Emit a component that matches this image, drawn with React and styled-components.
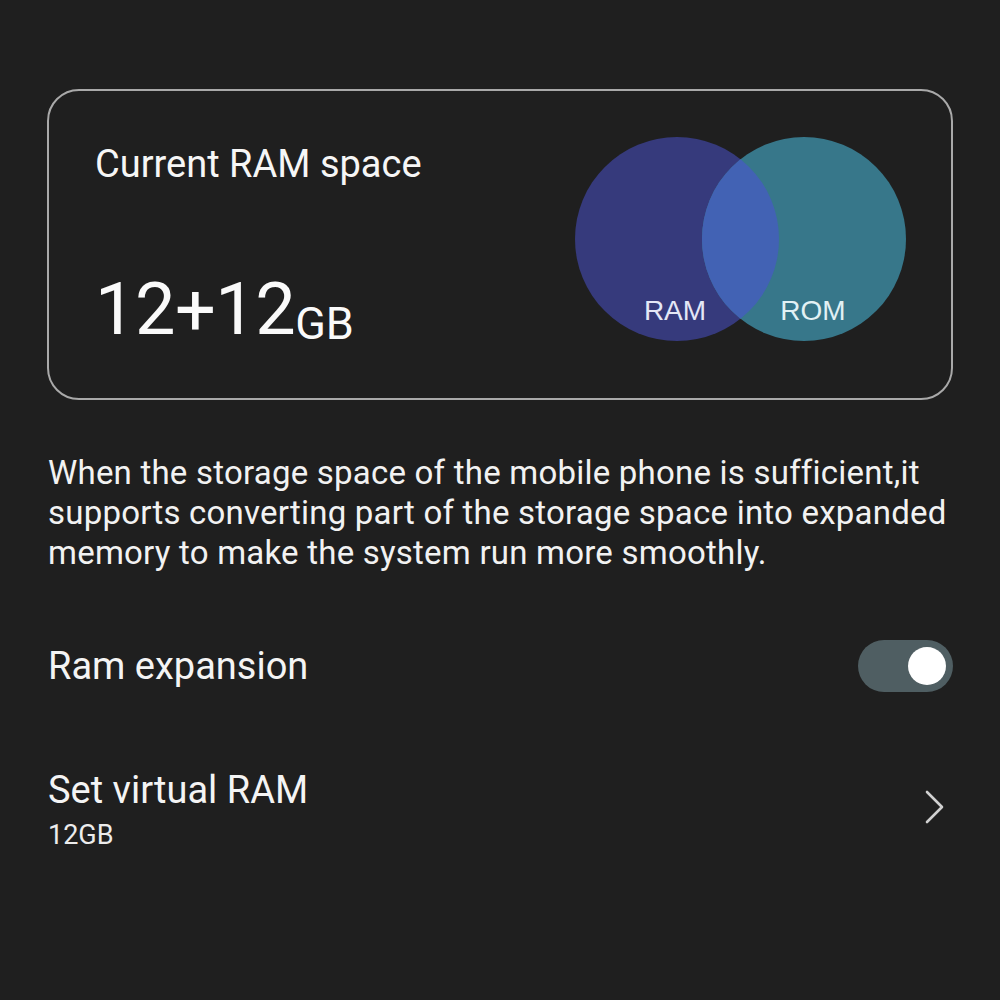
import React from "react";
import styled, { createGlobalStyle } from "styled-components";

const Global = createGlobalStyle`
  html, body {
    margin: 0;
    padding: 0;
    background: #1f1f1f;
  }
  body {
    font-family: Roboto, "Noto Sans", "Liberation Sans", sans-serif;
    color: #f4f4f4;
    -webkit-font-smoothing: antialiased;
  }
`;

const Page = styled.div`
  width: 1000px;
  min-height: 1000px;
  box-sizing: border-box;
  padding: 89px 47px 0 47px;
  background: #1f1f1f;
`;

const Card = styled.section`
  display: flex;
  justify-content: space-between;
  align-items: flex-start;
  border: 2px solid #a9a9a9;
  border-radius: 32px;
  padding: 54px 43px 52px 46px;
`;

const CardText = styled.div`
  display: flex;
  flex-direction: column;
  gap: 91px;
`;

const CardTitle = styled.div`
  font-size: 38px;
  line-height: 1;
  color: #f6f6f6;
`;

const Amount = styled.div`
  font-size: 72px;
  line-height: 1;
  color: #fafafa;
  letter-spacing: -0.5px;
`;

const Unit = styled.span`
  font-size: 45px;
  vertical-align: -5px;
  letter-spacing: 0;
`;

const Venn = styled.svg`
  display: block;
  margin-top: -10px;
  flex: none;
`;

const VennLabel = styled.text`
  font-family: "Liberation Sans", Arial, sans-serif;
  font-size: 28px;
  fill: ${(p) => p.$fill};
`;

const Description = styled.p`
  margin: 53px 0 0 1px;
  font-size: 33px;
  letter-spacing: 0.22px;
  line-height: 40px;
  color: #f2f2f2;
  white-space: nowrap;
`;

const Row = styled.div`
  display: flex;
  align-items: center;
  justify-content: space-between;
  margin-top: ${(p) => p.$top}px;
  padding-left: 1px;
`;

const RowText = styled.div`
  display: flex;
  flex-direction: column;
  gap: 4px;
`;

const RowTitle = styled.div`
  font-size: 38px;
  line-height: ${(p) => (p.$tall ? "52px" : "45.6px")};
  color: #f4f4f4;
`;

const RowSub = styled.div`
  font-size: 27px;
  line-height: 34px;
  color: #ececec;
`;

const Toggle = styled.div`
  width: 95px;
  height: 52px;
  border-radius: 26px;
  background: #4f5e62;
  box-sizing: border-box;
  padding: 7px;
  display: flex;
  justify-content: flex-end;
  align-items: center;
`;

const Knob = styled.div`
  width: 38px;
  height: 38px;
  border-radius: 50%;
  background: #ffffff;
`;

const Chevron = styled.svg`
  display: block;
  margin-right: 7px;
  margin-top: -6px;
`;

export default function App() {
  return (
    <>
      <Global />
      <Page>
        <Card>
          <CardText>
            <CardTitle>Current RAM space</CardTitle>
            <Amount>
              12+12<Unit>GB</Unit>
            </Amount>
          </CardText>
          <Venn width="334" height="208" viewBox="0 0 334 208">
            <defs>
              <clipPath id="leftClip">
                <circle cx="103" cy="104" r="102" />
              </clipPath>
            </defs>
            <circle cx="103" cy="104" r="102" fill="#363a7c" />
            <circle cx="230" cy="104" r="102" fill="#37778a" />
            <circle cx="230" cy="104" r="102" fill="#4262b4" clipPath="url(#leftClip)" />
            <VennLabel x="101" y="185" textAnchor="middle" $fill="#e4e7f6">RAM</VennLabel>
            <VennLabel x="239" y="185" textAnchor="middle" $fill="#e2f1f4">ROM</VennLabel>
          </Venn>
        </Card>

        <Description>
          When the storage space of the mobile phone is sufficient,it
          <br />
          supports converting part of the storage space into expanded
          <br />
          memory to make the system run more smoothly.
        </Description>

        <Row $top={67}>
          <RowTitle $tall>Ram expansion</RowTitle>
          <Toggle>
            <Knob />
          </Toggle>
        </Row>

        <Row $top={76}>
          <RowText>
            <RowTitle>Set virtual RAM</RowTitle>
            <RowSub>12GB</RowSub>
          </RowText>
          <Chevron width="22" height="36" viewBox="0 0 22 36">
            <polyline
              points="3,3 18,18 3,33"
              fill="none"
              stroke="#d0d0d0"
              strokeWidth="2.6"
              strokeLinecap="round"
              strokeLinejoin="round"
            />
          </Chevron>
        </Row>
      </Page>
    </>
  );
}
